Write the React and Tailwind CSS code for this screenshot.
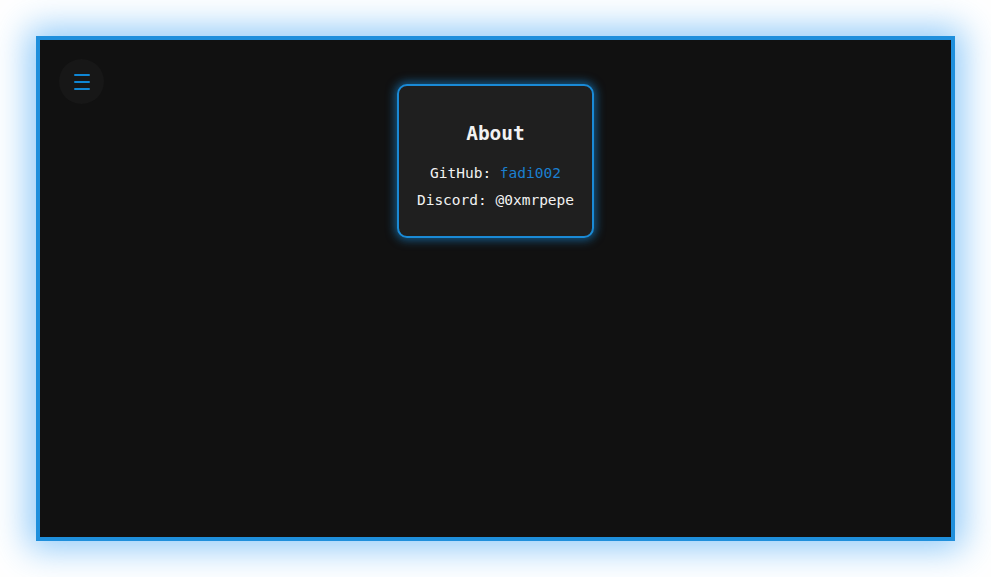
export default function App() {
  return (
    <div className="min-h-screen bg-white p-[36px]" style={{ fontFamily: '"DejaVu Sans Mono", monospace' }}>
      <div className="relative h-[505px] border-[4px] border-[#1f8fdc] bg-[#111111] shadow-[0_0_32px_8px_rgba(33,150,243,0.5)]">
        {/* menu button */}
        <button className="absolute left-[19px] top-[19px] flex h-[45px] w-[45px] flex-col items-center justify-center gap-[5px] rounded-full bg-[#171717]">
          <span className="block h-[2px] w-[16px] rounded bg-[#0f86d4]" />
          <span className="block h-[2px] w-[16px] rounded bg-[#0f86d4]" />
          <span className="block h-[2px] w-[16px] rounded bg-[#0f86d4]" />
        </button>

        <div className="flex justify-center pt-[44px]">
          <div className="flex w-[197px] flex-col items-center rounded-[10px] border-2 border-[#1a8ad6] bg-[#1f1f1f] pb-[22px] pt-[35px] text-[#f2f2f2] shadow-[0_0_10px_2px_rgba(24,140,220,0.6)]">
            <h2 className="text-[19.5px] font-bold leading-[26px]">About</h2>
            <p className="mt-[13px] text-[14.5px] leading-[27px]">
              GitHub: <span className="text-[#1b7fd0]">fadi002</span>
            </p>
            <p className="text-[14.5px] leading-[27px]">Discord: @0xmrpepe</p>
          </div>
        </div>
      </div>
    </div>
  )
}
